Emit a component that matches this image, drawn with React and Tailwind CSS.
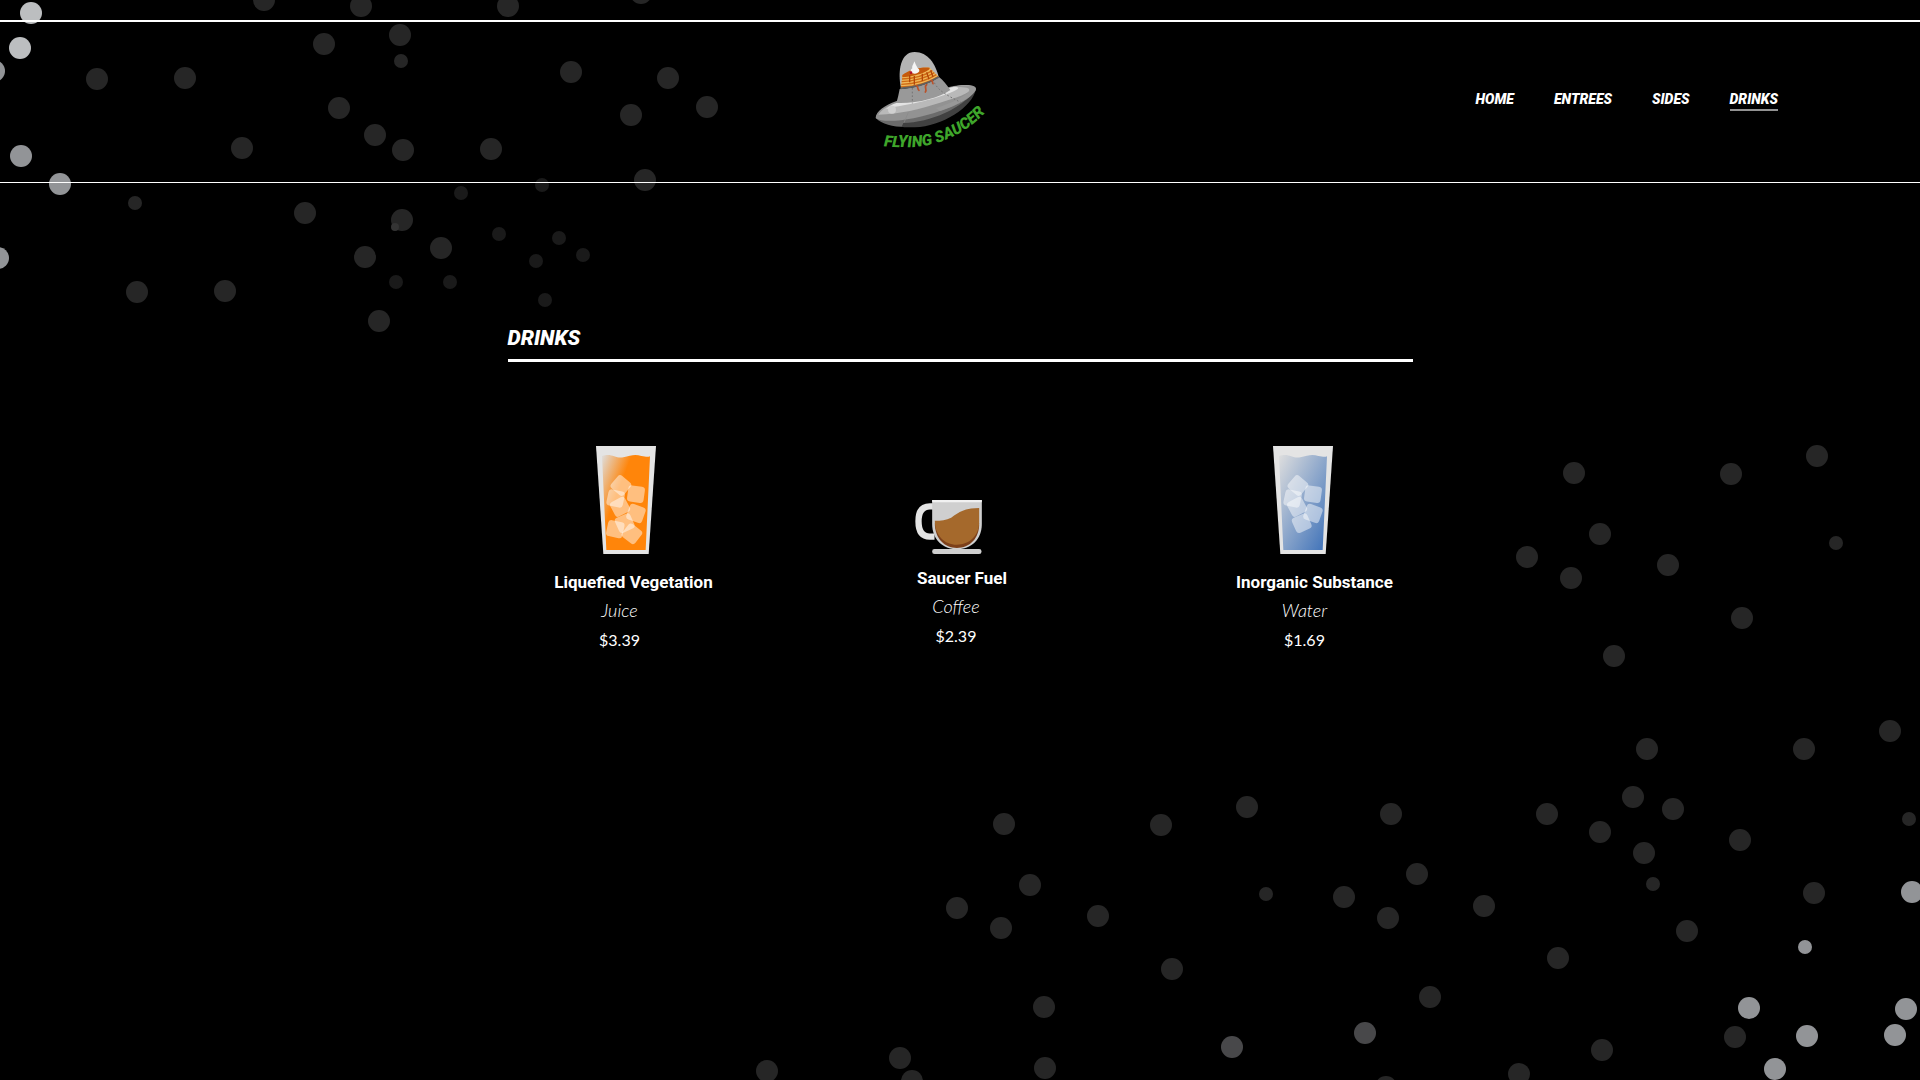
const COMIC = "font-[Roboto,sans-serif]";

const STARS = [
  { fill: "#bcbec0", r: 11, points: [[31, 13], [20, 48]] },
  {
    fill: "#929497", r: 11,
    points: [[-6, 71], [21, 156], [60, 184], [-2, 258], [1912, 892], [1749, 1008], [1906, 1009], [1895, 1035], [1807, 1036], [1775, 1069]],
  },
  { fill: "#929497", r: 7, points: [[1805, 947]] },
  { fill: "#48484a", r: 11, points: [[1232, 1047], [1365, 1033]] },
  {
    fill: "#262626", r: 11,
    points: [
      [264, 0], [361, 6], [324, 44], [97, 79], [185, 78], [339, 108], [375, 135], [242, 148], [305, 213], [365, 257],
      [137, 292], [225, 291], [379, 321], [508, 6], [641, -7], [400, 35], [571, 72], [668, 78], [707, 107], [631, 115],
      [403, 150], [491, 149], [645, 180], [402, 220], [441, 248],
      [1574, 473], [1731, 474], [1817, 456], [1600, 534], [1527, 557], [1571, 578], [1668, 565], [1742, 618], [1614, 656],
      [1647, 749], [1804, 749], [1890, 731], [1633, 797], [1673, 809], [1547, 814],
      [1600, 832], [1644, 853], [1740, 840], [1484, 906], [1687, 931], [1558, 958], [1430, 997], [1814, 893],
      [1735, 1037], [1602, 1050], [1519, 1074], [1004, 824], [1161, 825], [1247, 807], [1391, 814], [1030, 885],
      [957, 908], [1001, 928], [1098, 916], [1344, 897], [1388, 918], [1417, 874], [1172, 969], [1044, 1007],
      [1045, 1068], [1386, 1087], [912, 1081], [767, 1071], [900, 1058],
    ],
  },
  { fill: "#262626", r: 7, points: [[135, 203], [401, 61], [1836, 543], [1909, 819], [1653, 884], [1266, 894]] },
  {
    fill: "#1a1a1a", r: 7,
    points: [[542, 185], [461, 193], [499, 234], [559, 238], [583, 255], [536, 261], [396, 282], [450, 282], [545, 300]],
  },
  { fill: "#343434", r: 4, points: [[395, 227]] },
];

function Starfield() {
  return (
    <svg
      className="pointer-events-none absolute inset-0 h-full w-full"
      viewBox="0 0 1920 1080"
      preserveAspectRatio="xMidYMid slice"
      aria-hidden="true"
    >
      {STARS.map((group, i) => (
        <g key={i} fill={group.fill}>
          {group.points.map(([x, y]) => (
            <circle key={`${x}-${y}`} cx={x} cy={y} r={group.r} />
          ))}
        </g>
      ))}
    </svg>
  );
}

function Logo() {
  return (
    <svg className="h-[120px] w-[140px]" viewBox="0 0 420 360" role="img" aria-label="Flying Saucer">
      {/* glass dome */}
      <path d="M123 145 C112 92 122 36 164 36 C204 36 226 72 236 110 Z" fill="#b4b4b4" />
      {/* pancakes */}
      <path d="M127 106 C150 88 190 80 209 83 L236 110 C208 130 165 141 123 143 Z" fill="#f0b85a" />
      <path d="M127 105 C150 86 188 80 209 83 C212 92 172 108 127 112 Z" fill="#c4590c" />
      <g fill="none" stroke="#cf6a14" strokeWidth="4">
        <path d="M126 117 C160 116 195 106 217 92" />
        <path d="M125 125 C160 124 200 113 223 98" />
        <path d="M124 133 C163 132 204 120 229 104" />
        <path d="M123 141 C165 140 208 128 235 110" />
      </g>
      <path d="M149 105 V127 M163 108 V134 M187 101 V123 M200 97 L207 118 M212 91 L219 111" stroke="#b34708" strokeWidth="4" fill="none" />
      {/* whipped cream and berry */}
      <path d="M163 64 C160 75 155 78 157 85 C149 90 150 98 158 100 C166 104 174 99 178 94 C179 86 173 86 171 80 C168 76 166 70 163 64 Z" fill="#f5f5f5" />
      <circle cx="153" cy="98" r="4" fill="#b3122a" />
      {/* lower hull */}
      <path d="M47 234 C70 256 110 264 160 260 C225 254 318 206 348 149 L345 140 Z" fill="#6b6b6b" />
      <path d="M130 249 C210 247 310 205 348 146 C338 202 245 259 165 262 C148 262 134 262 125 260 Z" fill="#414141" />
      {/* upper hull */}
      <path d="M47 234 C47 214 76 195 108 184 L268 141 C310 133 348 132 348 147 C342 169 296 196 240 213 C165 240 70 252 47 234 Z" fill="#929292" />
      <path d="M55 224 C72 200 105 189 138 184 L280 140 C315 132 340 136 338 145 C331 159 290 174 240 188 C180 207 120 222 55 224 Z" fill="#b9b9b9" />
      <path d="M78 207 C92 194 108 187 128 185 L268 144 C289 138 304 143 287 151 C250 170 160 194 105 200 Z" fill="#e3e3e3" />
      <path d="M285 140 C325 132 348 138 347 147 C343 166 303 190 240 213 L228 204 C280 188 325 164 328 150 C328 140 304 143 285 140 Z" fill="#989898" />
      <circle cx="96" cy="209" r="12" fill="#d0d0d0" />
      <path d="M145 217 L132 248" stroke="#8a8a8a" strokeWidth="2" />
      {/* collar */}
      <path d="M119 147 C165 145 207 132 237 111 C249 120 259 133 271 150 C236 174 168 192 109 189 C113 177 116 162 119 147 Z" fill="#999" />
      <path d="M121 145 C166 142 206 130 236 111" stroke="#606060" strokeWidth="5" fill="none" />
      <path d="M157 144 V190 M223 128 C236 154 265 168 304 188" stroke="#747474" strokeWidth="3" strokeDasharray="5 6" fill="none" />
      {/* syrup drips */}
      <g fill="none" stroke="#b9522a" strokeWidth="5" strokeLinecap="round">
        <path d="M169 137 C177 142 171 147 177 151" />
        <path d="M200 134 C190 140 203 147 196 156" />
        <path d="M213 121 C222 123 215 128 219 131" />
      </g>
      <path id="logo-arc" d="M71 319 C140 326 205 321 250 302 C305 281 345 254 400 192" fill="none" />
      <text className={`${COMIC} text-[47px] font-black italic`} fill="#3fa62b">
        <textPath href="#logo-arc">FLYING SAUCER</textPath>
      </text>
    </svg>
  );
}

const CUBES = [
  [75, 118, 40], [120, 144, 8], [59, 157, 12], [72, 182, -28], [120, 202, 20], [86, 231, -24], [58, 249, 12], [108, 263, 38],
];

function Glass({ id, from, color, cubes }) {
  return (
    <svg className="h-[108px] w-[60px]" viewBox="0 0 180 324" aria-hidden="true">
      <defs>
        <linearGradient id={id} x1="0" y1="0" x2={from.x} y2={from.y}>
          <stop offset="0" stopColor="#dedede" />
          <stop offset="1" stopColor={color} />
        </linearGradient>
      </defs>
      <path d="M0 0 H180 L158 324 H22 Z" fill="#e4e4e4" />
      <path d="M18 30 C48 20 56 38 82 34 C105 27 120 24 136 30 C148 32 155 34 162 31 L149 312 H31 Z" fill={`url(#${id})`} />
      {CUBES.slice(0, cubes).map(([x, y, angle]) => (
        <rect
          key={`${x}-${y}`}
          x={x - 25} y={y - 24} width="50" height="49" rx="10"
          fill="#fff" fillOpacity="0.48"
          transform={`rotate(${angle} ${x} ${y})`}
        />
      ))}
    </svg>
  );
}

function Mug() {
  return (
    <svg className="h-[54px] w-[67px]" viewBox="72 60 200 162" aria-hidden="true">
      <path d="M126 79 H116 C92 79 82 96 82 124 C82 154 92 170 116 170 H130" fill="none" stroke="#e4e4e4" strokeWidth="19" />
      <path d="M123 60 H272 V132 C272 178 240 208 197 208 C155 208 123 178 123 132 Z" fill="#cfcfcf" />
      <path d="M123 60 H272 V67 H123 Z" fill="#f1f1f1" />
      <path d="M131 130 H264 C265 176 235 204 197 204 C160 204 131 176 131 130 Z" fill="#7d401a" />
      <path d="M131 122 C150 122 165 121 180 113 C205 96 220 84 264 84 V126 C264 168 234 194 197 194 C160 194 131 166 131 122 Z" fill="#a5692c" />
      <rect x="123" y="207" width="148" height="15" rx="7" fill="#cfcfcf" />
    </svg>
  );
}

const DRINKS = [
  {
    name: "Liquefied Vegetation", kind: "Juice", price: "$3.39",
    box: "w-[164px]", art: "pr-4", text: "pr-7", gap: "pt-4",
    picture: <Glass id="juice" from={{ x: 0.4, y: 0.3 }} color="#ff850a" cubes={8} />,
  },
  {
    name: "Saucer Fuel", kind: "Coffee", price: "$2.39",
    box: "w-[114px] pr-7", art: "pr-7", text: "pr-3", gap: "pt-3",
    picture: <Mug />,
  },
  {
    name: "Inorganic Substance", kind: "Water", price: "$1.69",
    box: "w-[156px]", art: "pr-6", text: "pr-5", gap: "pt-4",
    picture: <Glass id="water" from={{ x: 1, y: 1 }} color="#3c70b8" cubes={6} />,
  },
];

const LINKS = [
  { label: "HOME" },
  { label: "ENTREES" },
  { label: "SIDES" },
  { label: "DRINKS", current: true },
];

export default function App() {
  return (
    <div className="relative min-h-screen overflow-hidden bg-black pt-5 text-white">
      <Starfield />
      <header className="relative grid grid-cols-[1fr_auto_1fr] items-center border-t-2 border-b border-white pt-[18px] pr-[60px] pb-[22px]">
        <a href="#home" className="col-start-2">
          <Logo />
        </a>
        <nav className={`${COMIC} flex justify-end gap-10 pr-[82px] text-sm leading-5 font-black italic`}>
          {LINKS.map(({ label, current }) => (
            <a
              key={label}
              href={`#${label.toLowerCase()}`}
              aria-current={current ? "page" : undefined}
              className={current ? "border-b-2 border-[#929292]" : "border-b-2 border-transparent"}
            >
              {label}
            </a>
          ))}
        </nav>
      </header>
      <main className="relative mx-auto w-[905px] max-w-full pt-[139px]">
        <h1 className={`${COMIC} border-b-[3px] border-white pb-[5px] text-[21px] leading-8 font-black italic`}>DRINKS</h1>
        <ul className="flex justify-between pt-[84px] pr-5 pl-11">
          {DRINKS.map((d) => (
            <li key={d.name} className={`flex flex-col items-center whitespace-nowrap ${d.box}`}>
              <div className={`flex h-[108px] items-end ${d.art}`}>{d.picture}</div>
              <h2 className={`${COMIC} ${d.gap} text-[17px] leading-6 font-bold`}>{d.name}</h2>
              <div className={`flex flex-col items-center gap-1.5 pt-1 font-[Lato,sans-serif] leading-6 ${d.text}`}>
                <p className="text-lg leading-6 font-light italic">{d.kind}</p>
                <p className="text-base leading-6">{d.price}</p>
              </div>
            </li>
          ))}
        </ul>
      </main>
    </div>
  );
}
